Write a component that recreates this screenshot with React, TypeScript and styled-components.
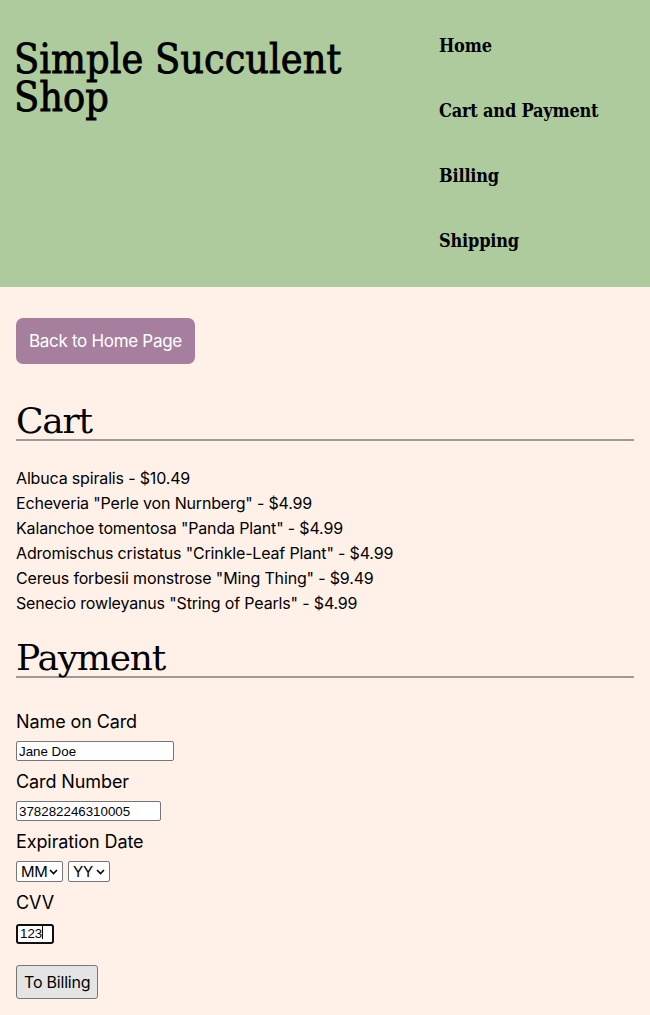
import React from "react";
import styled, { createGlobalStyle } from "styled-components";

const Global = createGlobalStyle`
  html, body { margin: 0; padding: 0; }
  body {
    background: #fff0e8;
    font-family: "Inter", "Noto Sans", sans-serif;
    color: #000;
  }
  * { box-sizing: border-box; }
`;

const Header = styled.header`
  background: #aecb9d;
  height: 287px;
  display: flex;
  justify-content: space-between;
  padding: 40px 0 0 14px;
`;

const Title = styled.h1`
  margin: 0;
  width: 400px;
  font-family: "DejaVu Serif Condensed", "DejaVu Serif", serif;
  font-stretch: condensed;
  font-weight: 400;
  font-size: 41px;
  line-height: 38px;
  letter-spacing: 0px;
  -webkit-text-stroke: 0.8px #000;
`;

const Nav = styled.nav`
  width: 211px;
`;

const NavList = styled.ul`
  list-style: none;
  margin: 0;
  padding: 0;
  display: flex;
  flex-direction: column;
  gap: 40px;
  margin-top: -7px;
`;

const NavItem = styled.li`
  font-family: "DejaVu Serif Condensed", "DejaVu Serif", serif;
  font-stretch: condensed;
  font-weight: 700;
  font-size: 18px;
  line-height: 25px;
  letter-spacing: -0.2px;
`;

const Main = styled.main`
  padding: 31px 16px 16px;
`;

const BackButton = styled.button`
  display: block;
  height: 46px;
  padding: 0 13px;
  border: none;
  border-radius: 7px;
  background: #a67f9f;
  color: #fff;
  font-family: "Inter", sans-serif;
  font-size: 17px;
  letter-spacing: -0.3px;
`;

const SectionTitle = styled.h2<{ $top: number }>`
  margin: ${(p) => p.$top}px 0 0;
  font-family: "DejaVu Serif", serif;
  font-weight: 400;
  font-size: 36px;
  line-height: 36px;
  border-bottom: 2px solid #9e9a98;
  letter-spacing: -1.2px;
`;

const CartList = styled.ul`
  list-style: none;
  margin: 25px 0 0;
  padding: 0;
`;

const CartItem = styled.li`
  font-size: 16px;
  line-height: 25px;
  letter-spacing: -0.16px;
`;

const Form = styled.form`
  display: flex;
  flex-direction: column;
  align-items: flex-start;
  margin-top: 33px;
`;

const Field = styled.div<{ $first?: boolean }>`
  display: flex;
  flex-direction: column;
  align-items: flex-start;
  gap: 8px;
  margin-top: ${(p) => (p.$first ? 0 : 10)}px;
`;

const Label = styled.label`
  font-size: 18px;
  line-height: 22px;
  letter-spacing: -0.1px;
`;

const TextInput = styled.input<{ $w: number; $focus?: boolean }>`
  width: ${(p) => p.$w}px;
  height: 20px;
  padding: 1px 2px;
  border: ${(p) => (p.$focus ? "2px solid #101010" : "1px solid #767676")};
  border-radius: ${(p) => (p.$focus ? 3 : 2)}px;
  background: #fff;
  font-family: "Liberation Sans", Arial, sans-serif;
  font-size: 13.33px;
  color: #000;
  outline: none;
`;

const CaretWrap = styled.div`
  position: relative;
`;

const Caret = styled.span`
  position: absolute;
  left: 26px;
  top: 4px;
  width: 1px;
  height: 13px;
  background: #000;
`;

const SelectRow = styled.div`
  display: flex;
  gap: 5px;
`;

const chevron =
  "url(\"data:image/svg+xml;utf8,<svg xmlns='http://www.w3.org/2000/svg' width='9' height='6' viewBox='0 0 9 6'><path d='M1 1l3.5 3.5L8 1' fill='none' stroke='black' stroke-width='1.6'/></svg>\")";

const Select = styled.select<{ $w: number }>`
  appearance: none;
  -webkit-appearance: none;
  width: ${(p) => p.$w}px;
  height: 21px;
  padding: 0 0 0 4px;
  border: 1px solid #767676;
  border-radius: 2px;
  background: #fff ${chevron} no-repeat right 4px center;
  font-family: "Inter", sans-serif;
  font-size: 15px;
  letter-spacing: -0.3px;
  color: #000;
`;

const SubmitButton = styled.button`
  margin-top: 21px;
  height: 34px;
  padding: 0 7px;
  border: 1px solid #767676;
  border-radius: 3px;
  background: #e4e4e4;
  font-family: "Inter", sans-serif;
  font-size: 16px;
  letter-spacing: -0.2px;
  color: #000;
`;

const items = [
  'Albuca spiralis - $10.49',
  'Echeveria "Perle von Nurnberg" - $4.99',
  'Kalanchoe tomentosa "Panda Plant" - $4.99',
  'Adromischus cristatus "Crinkle-Leaf Plant" - $4.99',
  'Cereus forbesii monstrose "Ming Thing" - $9.49',
  'Senecio rowleyanus "String of Pearls" - $4.99',
];

export default function App() {
  return (
    <>
      <Global />
      <Header>
        <Title>Simple Succulent Shop</Title>
        <Nav>
          <NavList>
            <NavItem>Home</NavItem>
            <NavItem>Cart and Payment</NavItem>
            <NavItem>Billing</NavItem>
            <NavItem>Shipping</NavItem>
          </NavList>
        </Nav>
      </Header>
      <Main>
        <BackButton type="button">Back to Home Page</BackButton>
        <SectionTitle $top={39}>Cart</SectionTitle>
        <CartList>
          {items.map((t) => (
            <CartItem key={t}>{t}</CartItem>
          ))}
        </CartList>
        <SectionTitle $top={24}>Payment</SectionTitle>
        <Form onSubmit={(e) => e.preventDefault()}>
          <Field $first>
            <Label htmlFor="name">Name on Card</Label>
            <TextInput id="name" $w={158} defaultValue="Jane Doe" />
          </Field>
          <Field>
            <Label htmlFor="num">Card Number</Label>
            <TextInput id="num" $w={145} defaultValue="378282246310005" />
          </Field>
          <Field>
            <Label>Expiration Date</Label>
            <SelectRow>
              <Select $w={47} defaultValue="MM">
                <option>MM</option>
              </Select>
              <Select $w={42} defaultValue="YY">
                <option>YY</option>
              </Select>
            </SelectRow>
          </Field>
          <Field>
            <Label htmlFor="cvv">CVV</Label>
            <CaretWrap>
              <TextInput id="cvv" $w={38} $focus defaultValue="123" />
              <Caret />
            </CaretWrap>
          </Field>
          <SubmitButton type="submit">To Billing</SubmitButton>
        </Form>
      </Main>
    </>
  );
}
